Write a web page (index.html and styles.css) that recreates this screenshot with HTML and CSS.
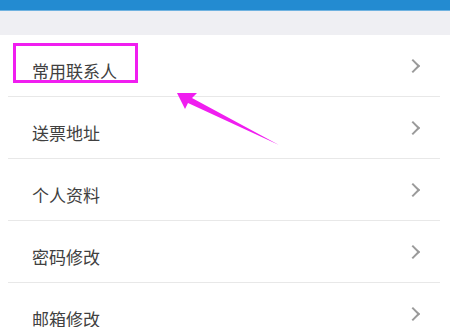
FILE: index.html
```html
<!DOCTYPE html>
<html lang="zh-CN">
  <head>
    <meta charset="UTF-8" />
    <meta name="viewport" content="width=device-width, initial-scale=1.0" />
    <title>个人中心</title>
    <link rel="stylesheet" href="styles.css">
  </head>
  <body>
    <div class="top-bar"></div>
    <div class="gap-band"></div>
    <ul class="menu">
      <li class="menu-item"><span class="label">常用联系人</span><span class="chevron"></span></li>
      <li class="menu-item"><span class="label">送票地址</span><span class="chevron"></span></li>
      <li class="menu-item"><span class="label">个人资料</span><span class="chevron"></span></li>
      <li class="menu-item"><span class="label">密码修改</span><span class="chevron"></span></li>
      <li class="menu-item"><span class="label">邮箱修改</span><span class="chevron"></span></li>
    </ul>

    <!-- annotation drawn over the list -->
    <div class="highlight-box"></div>
    <svg class="pointer" width="450" height="327" viewBox="0 0 450 327">
      <polygon points="177,93 197,93 192,98 279,145 188,103 185,109" fill="#f01ef0" />
    </svg>
  </body>
</html>
```

FILE: styles.css
```css
* {
  box-sizing: border-box;
}
body {
  margin: 0;
  background-color: #ffffff;
  font-family: "Noto Sans CJK SC", "Noto Sans", sans-serif;
  overflow: hidden;
}
.top-bar {
  height: 11px;
  background-color: #238bd1;
  border-bottom: 1px solid #6fb2e0;
}
.gap-band {
  height: 24px;
  background-color: #efeff3;
}
.menu {
  list-style: none;
  margin: 0;
  padding: 0;
}
.menu-item {
  display: flex;
  align-items: center;
  justify-content: space-between;
  height: 62px;
  margin-left: 8px;
  margin-right: 10px;
  padding-left: 24px;
  padding-right: 22px;
  border-bottom: 1px solid #e8e8e8;
}
.label {
  font-size: 17px;
  color: #404040;
  padding-top: 10px;
}
.chevron {
  width: 10px;
  height: 10px;
  border-top: 2px solid #9a9a9a;
  border-right: 2px solid #9a9a9a;
  transform: rotate(45deg);
}
.highlight-box {
  position: absolute;
  left: 13px;
  top: 43px;
  width: 125px;
  height: 40px;
  border: 3px solid #f01ef0;
}
.pointer {
  position: absolute;
  left: 0;
  top: 0;
}
```
